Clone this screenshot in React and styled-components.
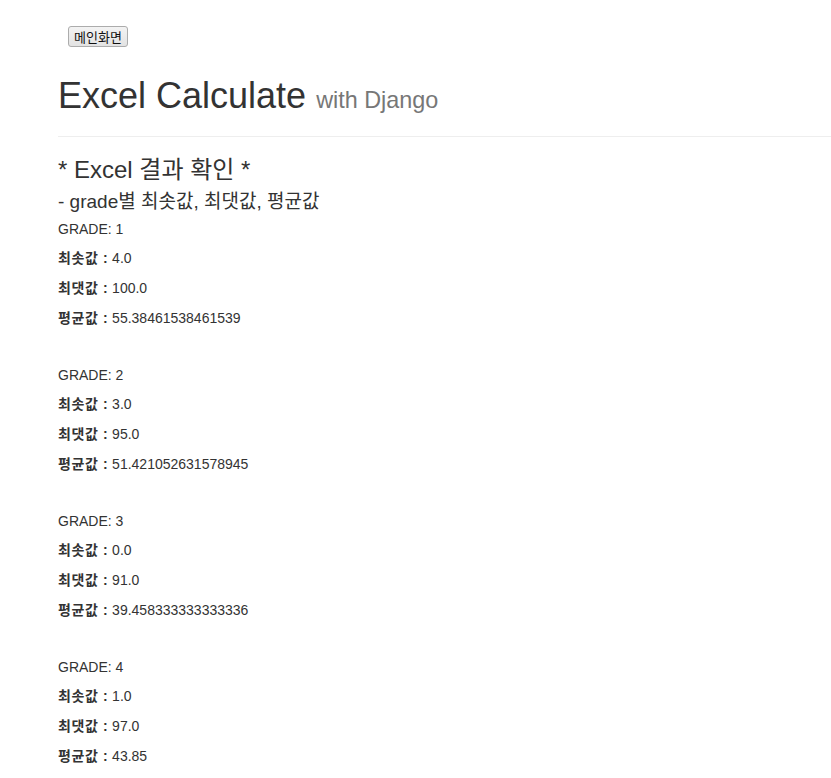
import React from 'react';
import styled, { createGlobalStyle } from 'styled-components';

const results = [
  { grade: 1, min: '4.0', max: '100.0', avg: '55.38461538461539' },
  { grade: 2, min: '3.0', max: '95.0', avg: '51.421052631578945' },
  { grade: 3, min: '0.0', max: '91.0', avg: '39.458333333333336' },
  { grade: 4, min: '1.0', max: '97.0', avg: '43.85' },
];

const GlobalStyle = createGlobalStyle`
  body {
    margin: 0;
    background: #fff;
    color: #333;
    font-family: "Liberation Sans", Arial, "Noto Sans CJK KR", sans-serif;
    font-size: 14px;
    line-height: 20px;
  }
`;

const App = () => (
  <>
    <GlobalStyle />
    <Page>
      <ButtonBar>
        <HomeButton type="button">메인화면</HomeButton>
      </ButtonBar>
      <PageHeader>
        <Title>
          Excel Calculate <Small>with Django</Small>
        </Title>
      </PageHeader>
      <SectionTitle>* Excel 결과 확인 *</SectionTitle>
      <SubTitle>- grade별 최솟값, 최댓값, 평균값</SubTitle>
      <Results>
        {results.map(r => (
          <Group key={r.grade}>
            <GradeLabel>GRADE: {r.grade}</GradeLabel>
            <Row><b>최솟값 :</b> {r.min}</Row>
            <Row><b>최댓값 :</b> {r.max}</Row>
            <Row><b>평균값 :</b> {r.avg}</Row>
          </Group>
        ))}
      </Results>
    </Page>
  </>
);

export default App;

const Page = styled.div`
  padding-left: 58px;
`;

const ButtonBar = styled.div`
  padding: 26px 0 0 10px;
  height: 21px;
`;

const HomeButton = styled.button`
  display: block;
  width: 60px;
  height: 21px;
  padding: 0;
  border: 1px solid #acacac;
  border-radius: 3px;
  background: linear-gradient(#f3f3f3, #e3e3e3);
  color: #111;
  font-family: "Noto Sans CJK KR", sans-serif;
  font-size: 13px;
  line-height: 19px;
  cursor: pointer;
`;

const PageHeader = styled.div`
  margin-top: 29px;
  padding-bottom: 20px;
  border-bottom: 1px solid #eee;
`;

const Title = styled.h1`
  margin: 0;
  font-size: 36px;
  font-weight: 400;
  line-height: 40px;
  color: #333;
`;

const Small = styled.small`
  font-size: 65%;
  line-height: 1;
  color: #777;
`;

const SectionTitle = styled.h3`
  margin: 20px 0 0;
  font-size: 24px;
  font-weight: 400;
  line-height: 26px;
`;

const SubTitle = styled.h4`
  margin: 9px 0 0;
  font-size: 19px;
  font-weight: 400;
  line-height: 20px;
`;

const Results = styled.div`
  margin-top: 8px;
  display: flex;
  flex-direction: column;
  gap: 38px;
`;

const Group = styled.div`
  display: flex;
  flex-direction: column;
  gap: 10px;
`;

const GradeLabel = styled.div`
  line-height: 18px;
`;

const Row = styled.p`
  margin: 0;
  line-height: 20px;

  b {
    font-weight: 700;
    letter-spacing: 0.6px;
  }
`;
